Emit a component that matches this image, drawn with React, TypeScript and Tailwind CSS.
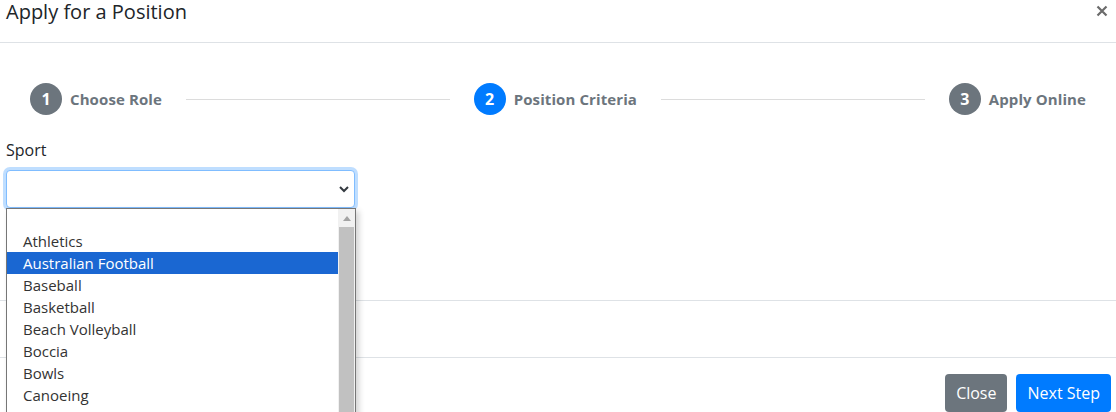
import React from "react";

const SPORTS = [
  "",
  "Athletics",
  "Australian Football",
  "Baseball",
  "Basketball",
  "Beach Volleyball",
  "Boccia",
  "Bowls",
  "Canoeing",
  "Cricket",
];

const FONT = { fontFamily: '"Segoe UI", "Open Sans", "Noto Sans", sans-serif' };

function Step({ n, label, active }: { n: number; label: string; active?: boolean }) {
  return (
    <div className="flex items-center p-[20px]">
      <span
        className={`m-[4px] w-[32px] h-[32px] rounded-full flex items-center justify-center text-white font-bold text-[16px] ${active ? "bg-[#007bff]" : "bg-[#6c757d]"}`}
      >
        {n}
      </span>
      <span className="m-[4px] font-bold text-[15px] tracking-[0.1px] text-[#6c757d] whitespace-nowrap">{label}</span>
    </div>
  );
}

function StepLine() {
  return <div className="flex-1 h-px bg-[#dcdcdc]" />;
}

function SportDropdown() {
  return (
    <div className="absolute left-[6px] top-[208px] w-[350px] h-[220px] bg-white border border-[#767676] shadow-[3px_3px_6px_rgba(0,0,0,0.18)] flex">
      <ul className="flex-1 text-[15px] text-[#333] leading-[22px]">
        {SPORTS.map((s, i) => (
          <li
            key={i}
            className={`pl-[16px] ${i === 0 ? "h-[21px]" : "h-[22px]"} ${i === 2 ? "bg-[#1a67d2] text-white" : ""}`}
          >
            {s}
          </li>
        ))}
      </ul>
      <div className="w-[17px] bg-[#f1f1f1] flex flex-col items-center">
        <div className="h-[18px] flex items-center justify-center">
          <svg width="8" height="5" viewBox="0 0 8 5">
            <path d="M0 5 L4 0 L8 5 Z" fill="#a3a3a3" />
          </svg>
        </div>
        <div className="flex-1 w-[15px] bg-[#c1c1c1]" />
      </div>
    </div>
  );
}

export default function App() {
  return (
    <div className="relative w-[1116px] h-[412px] overflow-hidden bg-white text-[#212529]" style={FONT}>
      {/* header */}
      <div className="h-[43px] border-b border-[#dee2e6] flex items-start justify-between px-[6px]">
        <h5 className="text-[20px] leading-[30px] mt-[-3px]">Apply for a Position</h5>
        <button className="mt-[5px] mr-[2px] text-black/50" aria-label="Close">
          <svg width="12" height="12" viewBox="0 0 12 12">
            <path d="M1.5 1.5 L10.5 10.5 M10.5 1.5 L1.5 10.5" stroke="#6b6b6b" strokeWidth="2.2" />
          </svg>
        </button>
      </div>

      {/* body */}
      <div className="h-[258px] border-b border-[#dee2e6] px-[6px] pt-[16px]">
        <div className="flex items-center">
          <Step n={1} label="Choose Role" />
          <StepLine />
          <Step n={2} label="Position Criteria" active />
          <StepLine />
          <Step n={3} label="Apply Online" />
        </div>
        <label className="block text-[16px] leading-[24px] mt-[-1px] mb-[8px] text-[#212529]">Sport</label>
        <div className="w-[349px] h-[38px] rounded-[4px] border border-[#80bdff] shadow-[0_0_0_3px_rgba(0,123,255,0.25)] bg-white flex items-center justify-end pr-[4px]">
          <svg width="12" height="8" viewBox="0 0 12 8">
            <path d="M2 2 L6 6 L10 2" stroke="#343a40" strokeWidth="2" fill="none" />
          </svg>
        </div>
      </div>

      {/* hidden section */}
      <div className="h-[57px] border-b border-[#dee2e6]" />

      {/* footer */}
      <div className="flex justify-end gap-[9px] pt-[16px] pr-[5px]">
        <button className="h-[38px] px-[11px] rounded-[4px] bg-[#6c757d] text-white text-[16px]">Close</button>
        <button className="h-[38px] px-[11px] rounded-[4px] bg-[#007bff] text-white text-[16px]">Next Step</button>
      </div>

      <SportDropdown />
    </div>
  );
}
